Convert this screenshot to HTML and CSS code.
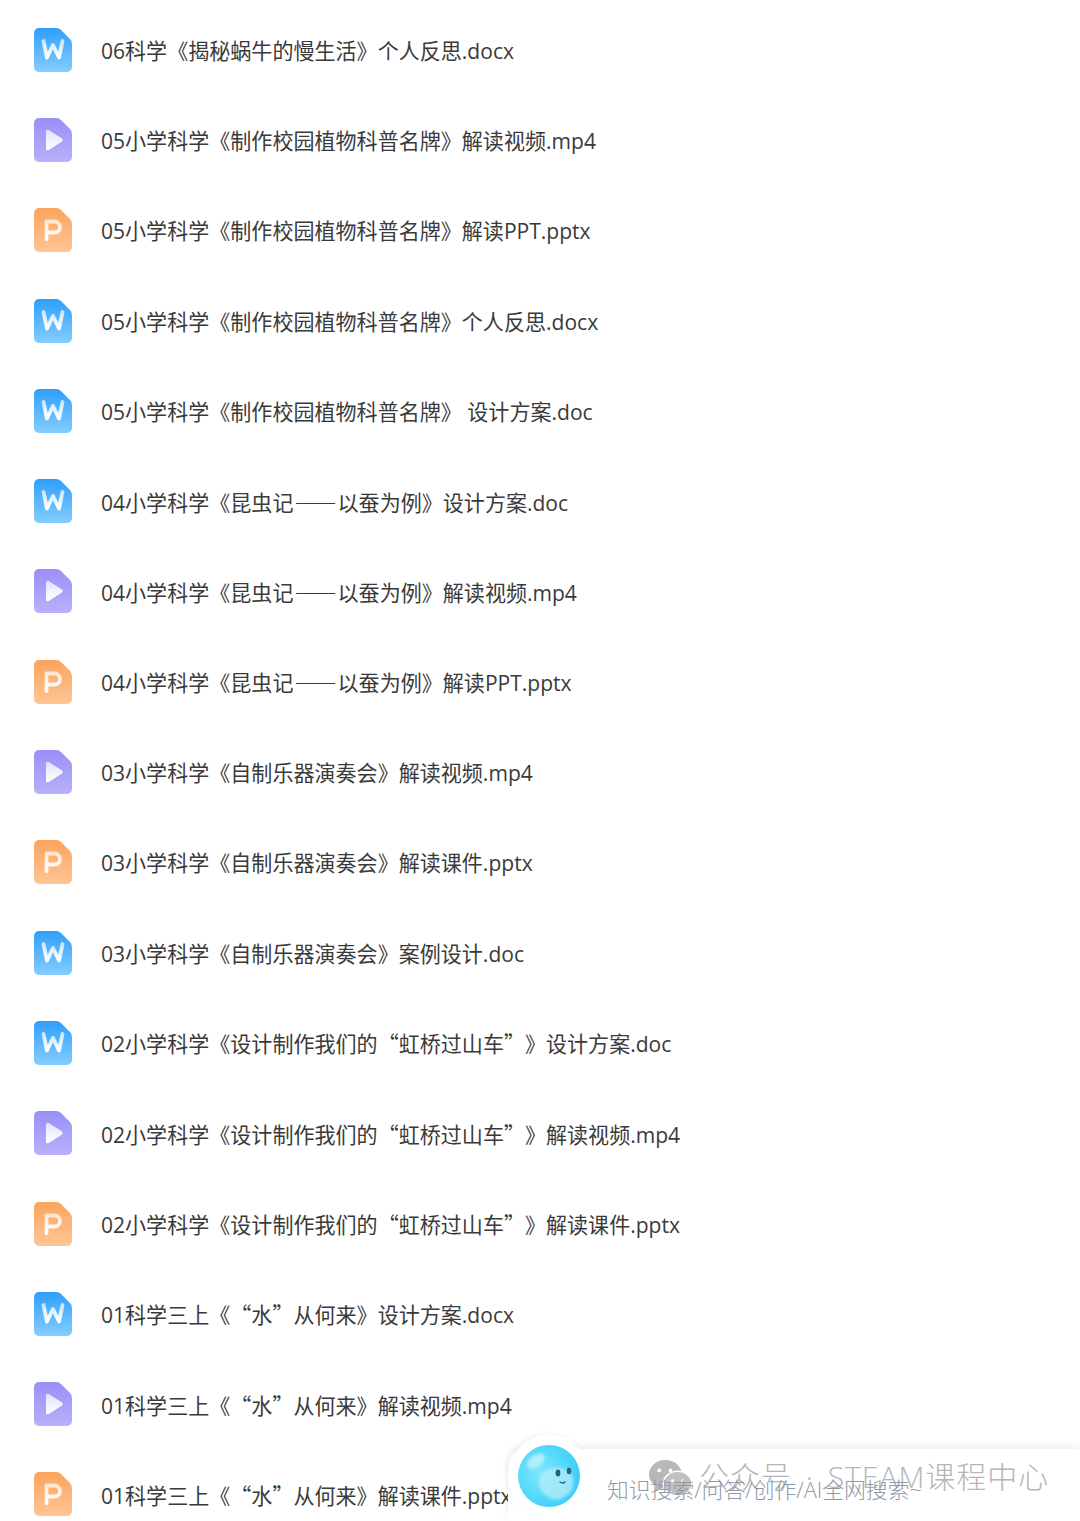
FILE: index.html
```html
<!DOCTYPE html>
<html lang="zh-CN">
<head>
  <meta charset="UTF-8">
  <title>文件列表</title>
  <link rel="stylesheet" href="styles.css">
</head>
<body>
  <svg class="defs" width="0" height="0">
    <defs>
      <linearGradient id="gradWord" x1="0" y1="0" x2="0" y2="1">
        <stop offset="0" stop-color="#2f9ffb"/>
        <stop offset="1" stop-color="#84cdff"/>
      </linearGradient>
      <linearGradient id="gradVideo" x1="0" y1="0" x2="0" y2="1">
        <stop offset="0" stop-color="#9a8ff9"/>
        <stop offset="1" stop-color="#b8b1fb"/>
      </linearGradient>
      <linearGradient id="gradPpt" x1="0" y1="0" x2="0" y2="1">
        <stop offset="0" stop-color="#fba45e"/>
        <stop offset="1" stop-color="#ffc594"/>
      </linearGradient>
      <linearGradient id="gradGlyph" x1="0" y1="0" x2="0" y2="1">
        <stop offset="0" stop-color="#ffffff" stop-opacity="0.7"/>
        <stop offset="1" stop-color="#ffffff"/>
      </linearGradient>
      <radialGradient id="gradBall" cx="0.35" cy="0.45" r="0.7">
        <stop offset="0" stop-color="#7fe6fb"/>
        <stop offset="0.6" stop-color="#52d8fb"/>
        <stop offset="1" stop-color="#3fc8f8"/>
      </radialGradient>
      <filter id="soft" x="-20%" y="-20%" width="140%" height="140%">
        <feGaussianBlur stdDeviation="1.6"/>
      </filter>
      <symbol id="iconWord" viewBox="0 0 38 44">
        <path d="M5 0H22Q25 0 27 2L36 11Q38 13 38 16V39a5 5 0 0 1-5 5H5a5 5 0 0 1-5-5V5a5 5 0 0 1 5-5Z" fill="url(#gradWord)"/>
        <path d="M9.5 13L13 29.5L19 17L25 29.5L28.5 13" fill="none" stroke="url(#gradGlyph)" stroke-width="3.8" stroke-linejoin="round" stroke-linecap="round"/>
      </symbol>
      <symbol id="iconVideo" viewBox="0 0 38 44">
        <path d="M5 0H22Q25 0 27 2L36 11Q38 13 38 16V39a5 5 0 0 1-5 5H5a5 5 0 0 1-5-5V5a5 5 0 0 1 5-5Z" fill="url(#gradVideo)"/>
        <path d="M12 13.5a1.8 1.8 0 0 1 2.7-1.5L28 20.5a1.8 1.8 0 0 1 0 3L14.7 32a1.8 1.8 0 0 1-2.7-1.5Z" fill="url(#gradGlyph)"/>
      </symbol>
      <symbol id="iconPpt" viewBox="0 0 38 44">
        <path d="M5 0H22Q25 0 27 2L36 11Q38 13 38 16V39a5 5 0 0 1-5 5H5a5 5 0 0 1-5-5V5a5 5 0 0 1 5-5Z" fill="url(#gradPpt)"/>
        <path d="M12.5 31V13.5H20.5a5.5 5.5 0 0 1 0 11H12.5" fill="none" stroke="url(#gradGlyph)" stroke-width="3.8" stroke-linejoin="round" stroke-linecap="round"/>
      </symbol>
    </defs>
  </svg>

  <div class="file-list">
    <div class="row"><svg class="icon"><use href="#iconWord"/></svg><span class="name">06科学《揭秘蜗牛的慢生活》个人反思.docx</span></div>
    <div class="row"><svg class="icon"><use href="#iconVideo"/></svg><span class="name">05小学科学《制作校园植物科普名牌》解读视频.mp4</span></div>
    <div class="row"><svg class="icon"><use href="#iconPpt"/></svg><span class="name">05小学科学《制作校园植物科普名牌》解读PPT.pptx</span></div>
    <div class="row"><svg class="icon"><use href="#iconWord"/></svg><span class="name">05小学科学《制作校园植物科普名牌》个人反思.docx</span></div>
    <div class="row"><svg class="icon"><use href="#iconWord"/></svg><span class="name">05小学科学《制作校园植物科普名牌》 设计方案.doc</span></div>
    <div class="row"><svg class="icon"><use href="#iconWord"/></svg><span class="name">04小学科学《昆虫记<span class="dash">——</span>以蚕为例》设计方案.doc</span></div>
    <div class="row"><svg class="icon"><use href="#iconVideo"/></svg><span class="name">04小学科学《昆虫记<span class="dash">——</span>以蚕为例》解读视频.mp4</span></div>
    <div class="row"><svg class="icon"><use href="#iconPpt"/></svg><span class="name">04小学科学《昆虫记<span class="dash">——</span>以蚕为例》解读PPT.pptx</span></div>
    <div class="row"><svg class="icon"><use href="#iconVideo"/></svg><span class="name">03小学科学《自制乐器演奏会》解读视频.mp4</span></div>
    <div class="row"><svg class="icon"><use href="#iconPpt"/></svg><span class="name">03小学科学《自制乐器演奏会》解读课件.pptx</span></div>
    <div class="row"><svg class="icon"><use href="#iconWord"/></svg><span class="name">03小学科学《自制乐器演奏会》案例设计.doc</span></div>
    <div class="row"><svg class="icon"><use href="#iconWord"/></svg><span class="name">02小学科学《设计制作我们的<span class="cjk">“</span>虹桥过山车<span class="cjk">”</span>》设计方案.doc</span></div>
    <div class="row"><svg class="icon"><use href="#iconVideo"/></svg><span class="name">02小学科学《设计制作我们的<span class="cjk">“</span>虹桥过山车<span class="cjk">”</span>》解读视频.mp4</span></div>
    <div class="row"><svg class="icon"><use href="#iconPpt"/></svg><span class="name">02小学科学《设计制作我们的<span class="cjk">“</span>虹桥过山车<span class="cjk">”</span>》解读课件.pptx</span></div>
    <div class="row"><svg class="icon"><use href="#iconWord"/></svg><span class="name">01科学三上《<span class="cjk">“</span>水<span class="cjk">”</span>从何来》设计方案.docx</span></div>
    <div class="row"><svg class="icon"><use href="#iconVideo"/></svg><span class="name">01科学三上《<span class="cjk">“</span>水<span class="cjk">”</span>从何来》解读视频.mp4</span></div>
    <div class="row"><svg class="icon"><use href="#iconPpt"/></svg><span class="name">01科学三上《<span class="cjk">“</span>水<span class="cjk">”</span>从何来》解读课件.pptx</span></div>
  </div>

  <div class="search-bar">
    <div class="ball-wrap">
      <svg class="ball" viewBox="0 0 64 64">
        <circle cx="32" cy="32" r="31" fill="url(#gradBall)"/>
        <ellipse cx="19" cy="17" rx="10" ry="6" fill="#d8f6fd" opacity="0.65" transform="rotate(-35 19 17)" filter="url(#soft)"/>
        <path d="M22 37c2-10 11-15 22-13 9 2 14 9 12 18-3 10-12 15-21 13-8-3-14-10-13-18Z" fill="#bdeffa" opacity="0.7" filter="url(#soft)"/>
        <ellipse cx="41" cy="29" rx="2.4" ry="3.4" fill="#2b5f80"/>
        <ellipse cx="52" cy="27" rx="2.2" ry="3.2" fill="#2b5f80"/>
        <path d="M43 38q3 2 5 0" fill="none" stroke="#2b5f80" stroke-width="1.3" stroke-linecap="round"/>
      </svg>
    </div>
    <svg class="wechat" viewBox="0 0 42 36">
      <ellipse cx="16" cy="14" rx="16" ry="14" fill="#b8b8b8"/>
      <path d="M7 24l-1 7 7-4Z" fill="#b8b8b8"/>
      <ellipse cx="28" cy="23" rx="14" ry="12" fill="#c0c0c0" stroke="#fff" stroke-width="1.5"/>
      <circle cx="10" cy="10" r="1.8" fill="#fff"/>
      <circle cx="21" cy="10" r="1.8" fill="#fff"/>
      <circle cx="23" cy="20" r="1.6" fill="#fff"/>
      <circle cx="33" cy="20" r="1.6" fill="#fff"/>
    </svg>
    <span class="watermark">公众号 · STEAM课程中心</span>
    <span class="search-hint">知识搜索/问答/创作/AI全网搜索~</span>
  </div>
</body>
</html>
```

FILE: styles.css
```css
html, body {
  margin: 0;
  padding: 0;
  height: 1521px;
  overflow: hidden;
  background-color: #fff;
}
body {
  position: relative;
  font-family: "Open Sans", "Noto Sans CJK SC", sans-serif;
  color: #3a3a3a;
}
.defs {
  position: absolute;
}
.file-list {
  padding: 5px 0 0 34px;
}
.row {
  display: flex;
  align-items: center;
  height: 90.3px;
}
.icon {
  width: 38px;
  height: 44px;
  flex: none;
  margin-right: 29px;
  margin-top: -1px;
}
.name {
  font-size: 21.05px;
  line-height: 30px;
  margin-top: 1px;
  white-space: pre;
  text-spacing-trim: space-all;
}
.cjk {
  font-family: "Noto Sans CJK SC", sans-serif;
}
.dash {
  font-family: "Noto Sans CJK SC", sans-serif;
  font-weight: 500;
  letter-spacing: 1px;
  margin-left: 1px;
}
.search-bar {
  position: absolute;
  left: 508px;
  top: 1449px;
  right: 0;
  bottom: 0;
  background-color: #fff;
  border-top-left-radius: 16px;
  box-shadow: 0 -3px 8px rgba(0, 0, 0, 0.07);
}
.ball-wrap {
  position: absolute;
  left: 0;
  top: -14px;
  width: 82px;
  height: 82px;
  display: flex;
  align-items: center;
  justify-content: center;
  background-color: #fff;
  border-radius: 50%;
  box-shadow: -2px -2px 5px rgba(0, 0, 0, 0.04);
}
.ball {
  width: 64px;
  height: 64px;
}
.wechat {
  position: absolute;
  left: 141px;
  top: 11px;
  width: 43px;
  height: 37px;
}
.watermark {
  position: absolute;
  left: 191px;
  top: 8px;
  font-size: 30px;
  letter-spacing: 1px;
  word-spacing: 5px;
  line-height: 40px;
  font-weight: 300;
  color: #b6b6b6;
  white-space: nowrap;
}
.search-hint {
  position: absolute;
  left: 99px;
  top: 25px;
  font-size: 21.8px;
  line-height: 32px;
  font-weight: 300;
  color: #8f9aa8;
  white-space: nowrap;
}
```
